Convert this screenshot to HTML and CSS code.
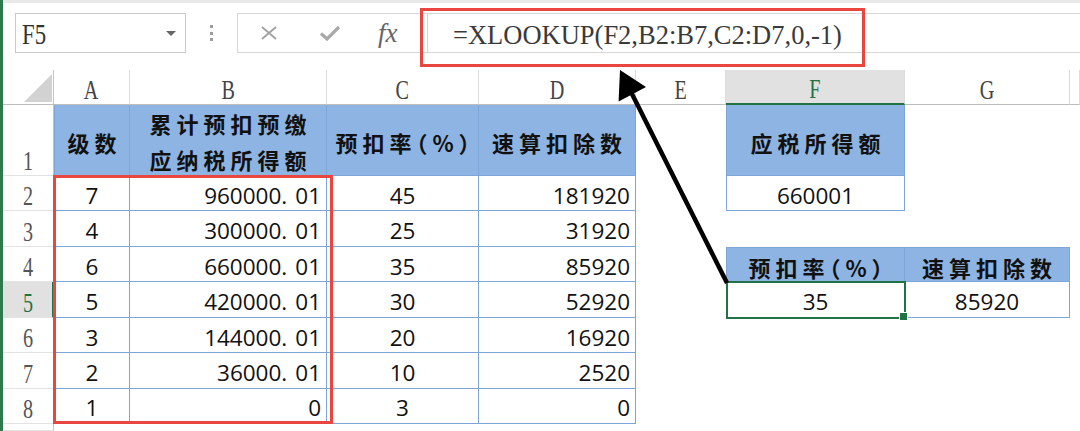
FILE: index.html
```html
<!DOCTYPE html>
<html lang="zh-CN">
<head>
<meta charset="utf-8">
<title>XLOOKUP</title>
<link rel="stylesheet" href="styles.css">
</head>
<body>
<div class="app">
  <div class="strip"></div>
  <div class="bar">
    <div class="namebox"><span class="sc nb">F5</span>
      <svg class="caret" width="10" height="6" viewBox="0 0 10 6"><polygon points="0,0 10,0 5,5" fill="#666"/></svg>
    </div>
    <div class="dots"><i></i><i></i><i></i></div>
    <div class="fbar">
      <div class="fbtns">
        <svg class="ic-x" width="18" height="14" viewBox="0 0 18 14"><path d="M2 1 L16 13 M16 1 L2 13" stroke="#a3a3a3" stroke-width="2" fill="none"/></svg>
        <svg class="ic-ok" width="22" height="16" viewBox="0 0 22 16"><path d="M2 8.5 L8 14 L20 2" stroke="#a9a9a9" stroke-width="3.2" fill="none"/></svg>
        <span class="fx">fx</span>
      </div>
      <div class="finput">=XLOOKUP(F2,B2:B7,C2:D7,0,-1)</div>
    </div>
  </div>

  <div class="sheet">
    <div class="corner"><svg width="50" height="34" viewBox="0 0 50 34"><polygon points="49,4 49,32 21,32" fill="#d2d2d2"/></svg></div>
    <div class="ch"><span class="sc">A</span></div>
    <div class="ch"><span class="sc">B</span></div>
    <div class="ch"><span class="sc">C</span></div>
    <div class="ch"><span class="sc">D</span></div>
    <div class="ch"><span class="sc">E</span></div>
    <div class="ch sel"><span class="sc">F</span></div>
    <div class="ch"><span class="sc">G</span></div>
    <div class="ch"></div>

    <div class="rh"><span class="sc">1</span></div>
    <div class="hd l">级数</div>
    <div class="hd two">累计预扣预缴<br>应纳税所得额</div>
    <div class="hd">预扣率<span class="pc">（%）</span></div>
    <div class="hd">速算扣除数</div>
    <div class="c"></div>
    <div class="hd l">应税所得额</div>
    <div class="c"></div>
    <div class="c"></div>

    <div class="rh"><span class="sc">2</span></div>
    <div class="t l ctr">7</div>
    <div class="t rt">960000<span class="dp">.</span>01</div>
    <div class="t ctr">45</div>
    <div class="t rt">181920</div>
    <div class="c"></div>
    <div class="t l ctr">660001</div>
    <div class="c"></div>
    <div class="c"></div>

    <div class="rh"><span class="sc">3</span></div>
    <div class="t l ctr">4</div>
    <div class="t rt">300000<span class="dp">.</span>01</div>
    <div class="t ctr">25</div>
    <div class="t rt">31920</div>
    <div class="c"></div>
    <div class="c"></div>
    <div class="c"></div>
    <div class="c"></div>

    <div class="rh"><span class="sc">4</span></div>
    <div class="t l ctr">6</div>
    <div class="t rt">660000<span class="dp">.</span>01</div>
    <div class="t ctr">35</div>
    <div class="t rt">85920</div>
    <div class="c"></div>
    <div class="hd l tp">预扣率<span class="pc">（%）</span></div>
    <div class="hd tp">速算扣除数</div>
    <div class="c"></div>

    <div class="rh sel"><span class="sc">5</span></div>
    <div class="t l ctr">5</div>
    <div class="t rt">420000<span class="dp">.</span>01</div>
    <div class="t ctr">30</div>
    <div class="t rt">52920</div>
    <div class="c"></div>
    <div class="t l ctr active">35</div>
    <div class="t ctr">85920</div>
    <div class="c"></div>

    <div class="rh"><span class="sc">6</span></div>
    <div class="t l ctr">3</div>
    <div class="t rt">144000<span class="dp">.</span>01</div>
    <div class="t ctr">20</div>
    <div class="t rt">16920</div>
    <div class="c"></div>
    <div class="c"></div>
    <div class="c"></div>
    <div class="c"></div>

    <div class="rh"><span class="sc">7</span></div>
    <div class="t l ctr">2</div>
    <div class="t rt">36000<span class="dp">.</span>01</div>
    <div class="t ctr">10</div>
    <div class="t rt">2520</div>
    <div class="c"></div>
    <div class="c"></div>
    <div class="c"></div>
    <div class="c"></div>

    <div class="rh"><span class="sc">8</span></div>
    <div class="t l ctr">1</div>
    <div class="t rt">0</div>
    <div class="t ctr">3</div>
    <div class="t rt">0</div>
    <div class="c"></div>
    <div class="c"></div>
    <div class="c"></div>
    <div class="c"></div>

    <div class="rh"></div>
    <div class="c"></div>
    <div class="c"></div>
    <div class="c"></div>
    <div class="c"></div>
    <div class="c"></div>
    <div class="c"></div>
    <div class="c"></div>
    <div class="c"></div>
  </div>

  <div class="mark mark-formula"></div>
  <div class="mark mark-range"></div>
  <svg class="arrow" width="1080" height="431" viewBox="0 0 1080 431">
    <line x1="727" y1="283" x2="630" y2="90" stroke="#000" stroke-width="4.5"/>
    <polygon points="620,70 618.6,101.5 646,87" fill="#000"/>
  </svg>
</div>
</body>
</html>
```

FILE: styles.css
```css
* { box-sizing: border-box; }
body { margin: 0; background: #fff; }

.app {
  position: relative;
  width: 1080px;
  height: 431px;
  overflow: hidden;
  border-left: 3px solid #2f7a4d;
  font-family: "Open Sans", "Noto Sans CJK SC", sans-serif;
  color: #111;
}

.strip { height: 3px; background: #e9e9e9; }

.bar {
  height: 67px;
  display: flex;
  align-items: flex-start;
  padding: 10px 0 0 12px;
}

.sc {
  display: inline-block;
  font-family: "Liberation Serif", serif;
  font-size: 28px;
  line-height: 1;
  transform: scaleX(0.72);
}

.namebox {
  width: 171px;
  height: 40px;
  border: 1px solid #c9c9c9;
  display: flex;
  align-items: center;
  justify-content: space-between;
  padding: 2px 9px 0 6px;
  color: #333;
}
.namebox .nb { font-size: 30px; transform-origin: left center; transform: scaleX(0.76); }

.dots {
  width: 51px;
  height: 40px;
  display: flex;
  flex-direction: column;
  align-items: center;
  justify-content: center;
  gap: 3.5px;
}
.dots i { display: block; width: 3px; height: 3px; background: #9d9d9d; }

.fbar {
  flex: 1;
  height: 40px;
  display: flex;
  border-top: 1px solid #d6d6d6;
  border-bottom: 1px solid #d6d6d6;
  border-left: 1px solid #d6d6d6;
}
.fbtns {
  width: 189px;
  display: flex;
  align-items: center;
}
.ic-x { margin-left: 22px; }
.ic-ok { margin-left: 41px; }
.fx {
  margin-left: 37px;
  font-family: "Liberation Serif", serif;
  font-style: italic;
  font-size: 27px;
  color: #666;
  line-height: 1;
}
.finput {
  flex: 1;
  border-left: 1px solid #d6d6d6;
  padding-left: 25px;
  display: flex;
  align-items: center;
  font-family: "Liberation Serif", serif;
  font-size: 26.5px;
  color: #3a3a3a;
  padding-top: 4px;
}

.sheet {
  display: grid;
  grid-template-columns: 51px 76px 197px 152px 157px 90px 179px 165px 1fr;
  grid-template-rows: 35px 71px repeat(7, 35.43px) 1fr;
  height: 361px;
}

.corner {
  border-right: 1px solid #c4c4c4;
  border-bottom: 1px solid #bdbdbd;
}
.corner svg { display: block; }

.ch {
  display: flex;
  align-items: flex-end;
  justify-content: center;
  border-right: 1px solid #dddddd;
  border-bottom: 1px solid #bdbdbd;
  color: #444;
}
.ch.sel {
  background: #e1e1e1;
  border-bottom: 2px solid #217346;
  color: #217346;
}

.rh {
  display: flex;
  align-items: flex-end;
  justify-content: center;
  border-right: 1px solid #c4c4c4;
  border-bottom: 1px solid #e3e3e3;
  color: #555;
}
.rh.sel {
  background: #e1e1e1;
  border-right: 2px solid #217346;
  color: #217346;
}

.t, .hd {
  display: flex;
  border-right: 1px solid #7ea5d8;
  border-bottom: 1px solid #7ea5d8;
}
.t {
  align-items: flex-end;
  padding: 0 5px 3px;
  font-size: 22.5px;
  line-height: 1;
  color: #111;
}
.ctr { justify-content: center; }
.rt { justify-content: flex-end; }
.dp { letter-spacing: 8px; }

.hd {
  background: #8eb4e3;
  align-items: center;
  justify-content: center;
  text-align: center;
  font-family: "Noto Sans CJK SC", sans-serif;
  font-weight: 600;
  font-size: 22px;
  letter-spacing: 5px;
  padding: 4px 0 0 5px;
  line-height: 1;
  color: #111;
}
.hd.two { line-height: 36px; padding-top: 2px; }
.pc { font-feature-settings: "halt" 1; }
.l { border-left: 1px solid #7ea5d8; }
.tp { border-top: 1px solid #7ea5d8; }

.active { position: relative; }
.active::after {
  content: "";
  position: absolute;
  left: -1px;
  top: -1px;
  right: -2px;
  bottom: -2px;
  border: 2px solid #217346;
}
.active::before {
  content: "";
  position: absolute;
  right: -4px;
  bottom: -4px;
  width: 7px;
  height: 7px;
  background: #217346;
  border: 1px solid #fff;
  z-index: 1;
}

.mark {
  position: absolute;
  border: 3px solid #e8463f;
}
.mark-formula { left: 417px; top: 8px; width: 445px; height: 59px; }
.mark-range { left: 50px; top: 175px; width: 280px; height: 249px; }

.arrow {
  position: absolute;
  left: -3px;
  top: 0;
  pointer-events: none;
}
```
